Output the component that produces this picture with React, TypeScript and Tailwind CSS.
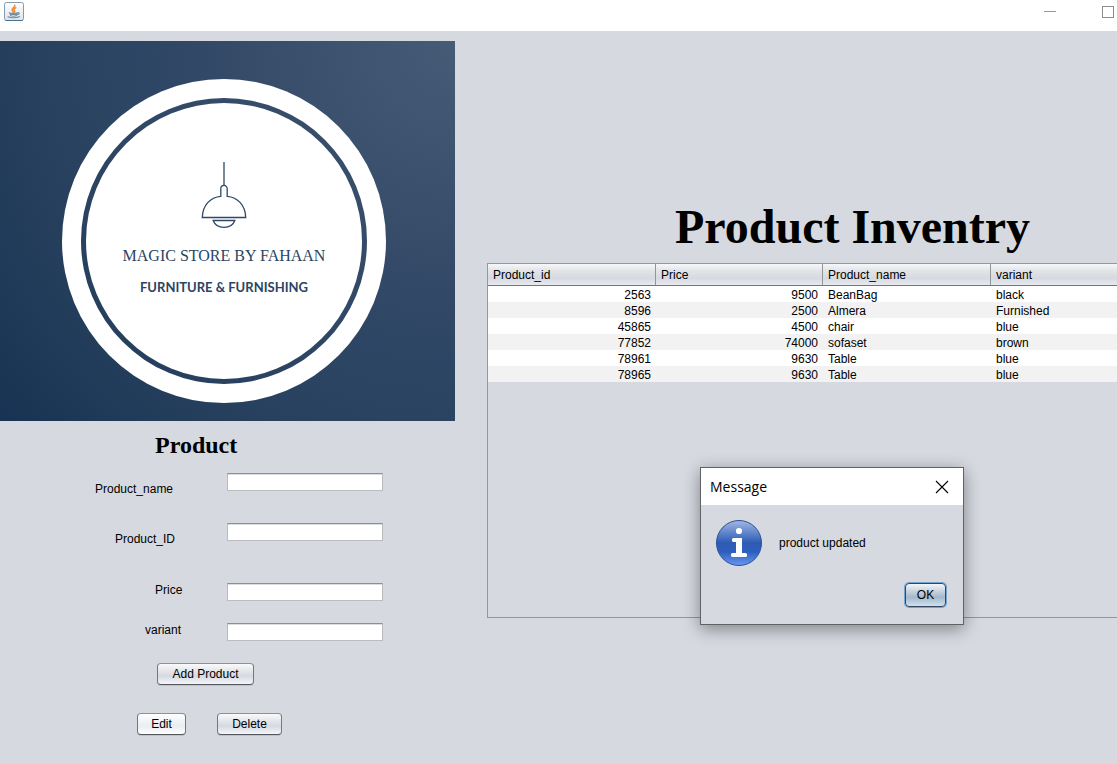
import { useState } from "react";

type Product = { id: number; price: number; name: string; variant: string };

const products: Product[] = [
  { id: 2563, price: 9500, name: "BeanBag", variant: "black" },
  { id: 8596, price: 2500, name: "Almera", variant: "Furnished" },
  { id: 45865, price: 4500, name: "chair", variant: "blue" },
  { id: 77852, price: 74000, name: "sofaset", variant: "brown" },
  { id: 78961, price: 9630, name: "Table", variant: "blue" },
  { id: 78965, price: 9630, name: "Table", variant: "blue" },
];

const fields = [
  { id: "product-name", label: "Product_name", indent: "pl-[95px] pt-[9px]", height: "h-[50px]" },
  { id: "product-id", label: "Product_ID", indent: "pl-[115px] pt-[9px]", height: "h-[60px]" },
  { id: "price", label: "Price", indent: "pl-[155px]", height: "h-[40px]" },
  { id: "variant", label: "variant", indent: "pl-[145px]", height: "h-[40px]" },
];

const buttonBase =
  "h-[22px] rounded-[4px] border border-t-[#8d9198] border-x-[#74787e] border-b-[#54585d] shadow-[0_1px_0_#bfc3c9] leading-[18px]";
const buttonNormal =
  "bg-[linear-gradient(#fafafc_0%,#e4e6ea_35%,#d6d9df_60%,#f4f6fb_100%)]";
const buttonHover =
  "bg-[linear-gradient(#ffffff_0%,#f0f2f6_40%,#e9ecf2_60%,#ffffff_100%)] border-b-[#2b2e33]";

function TitleBar() {
  return (
    <header className="flex h-[31px] items-start justify-between bg-white pl-1 pr-[3px]">
      <svg width="20" height="20" viewBox="0 0 20 20" className="mt-[2px]" aria-hidden="true">
        <defs>
          <linearGradient id="tile" x1="0" y1="0" x2="0" y2="1">
            <stop offset="0" stopColor="#ffffff" />
            <stop offset="1" stopColor="#dfe3e8" />
          </linearGradient>
        </defs>
        <rect x="0.5" y="0.5" width="19" height="18" rx="2" fill="url(#tile)" stroke="#7f9cb4" />
        <path d="M1.500 18.500h17" stroke="#47708f" />
        <path d="M10.800 3.200c.6 2-3.400 2.800-2.600 5 .3.900 1 1.400 1.100 2.200M11.800 5.800c-2.400 1-2.200 2-1.300 3 .4.600.1 1.200-.3 1.600" fill="none" stroke="#ee8a3c" strokeWidth="1.500" strokeLinecap="round" />
        <path d="M5.200 10.800c1.800.8 6 .8 8 0M6 11l.6 2.400c1.500.9 4.500.9 5.800 0l.6-2.400M13.400 10.700c2.600-.6 2.400 1.600-.4 2M4 14.800c1.500 1.300 9.500 1.300 11.500-.2" fill="none" stroke="#7593aa" strokeWidth="1.200" strokeLinecap="round" />
        <path d="M6.800 12.300h5.800" stroke="#5f87a6" strokeWidth="1.200" />
      </svg>
      <div className="flex gap-[46px]">
        <button type="button" aria-label="Minimize" className="flex h-[23px] w-3 items-center">
          <span className="h-px w-3 bg-[#999999]" />
        </button>
        <button type="button" aria-label="Maximize" className="flex h-6 w-3 items-center">
          <span className="h-3 w-3 border border-[#8c8c8c]" />
        </button>
      </div>
    </header>
  );
}

function StoreBanner() {
  return (
    <div className="flex h-[380px] items-start bg-[radial-gradient(circle_farthest-corner_at_100%_0%,#465b76_0%,#3b506c_26%,#304766_46%,#2a4462_62%,#243e5c_76%,#183253_100%)] pl-[62px] pt-[38px]">
      <div className="size-[324px] rounded-full bg-white p-[19px]">
        <div className="size-full rounded-full bg-[linear-gradient(45deg,#223c5b,#3b516d)] p-[5px]">
          <div className="flex size-full flex-col items-center rounded-full bg-white pt-[59px] text-[#2b4463]">
            <svg width="48" height="68" viewBox="0 0 48 68" fill="none" stroke="#2f4866" strokeWidth="1.300" aria-hidden="true">
              <path d="M24 0v23.500" />
              <path d="M20.800 34.300v-7.600a3.200 3.300 0 0 1 6.400 0v7.600c10.400.8 18.300 9 18.500 21.200H2.300C2.500 43.300 10.400 35.100 20.800 34.300Z" />
              <path d="M13.200 58.500h21.600c-1.500 4.300-5.600 6.800-10.800 6.800s-9.300-2.500-10.800-6.800Z" />
            </svg>
            <p className="mt-[16px] whitespace-nowrap font-['Liberation_Serif',serif] text-[16px] leading-[20px]">
              MAGIC STORE BY FAHAAN
            </p>
            <p className="mt-[11px] whitespace-nowrap font-['Lato',sans-serif] text-[13px] font-bold leading-[20px]">
              FURNITURE &amp; FURNISHING
            </p>
          </div>
        </div>
      </div>
    </div>
  );
}

function ProductForm() {
  return (
    <form onSubmit={(event) => event.preventDefault()}>
      <h2 className="pl-[155px] pt-[10px] font-['Liberation_Serif',serif] text-[24px] font-bold leading-[28px]">
        Product
      </h2>
      <div className="pt-[14px]">
        {fields.map((field) => (
          <div key={field.id} className={`flex items-start ${field.height}`}>
            <label htmlFor={field.id} className={`w-[227px] shrink-0 leading-[14px] ${field.indent}`}>
              {field.label}
            </label>
            <input
              id={field.id}
              type="text"
              className="h-[18px] w-[156px] border border-t-[#8d8e93] border-x-[#b9bbc0] border-b-[#babcc0] bg-white px-1 shadow-[inset_0_1px_0_#dcdde0] outline-none"
            />
          </div>
        ))}
      </div>
      <div className="pl-[157px]">
        <button type="submit" className={`w-[97px] ${buttonBase} ${buttonNormal}`}>
          Add Product
        </button>
      </div>
      <div className="flex gap-[31px] pl-[137px] pt-[28px]">
        <button type="button" className={`w-[49px] ${buttonBase} ${buttonHover}`}>
          Edit
        </button>
        <button type="button" className={`w-[65px] ${buttonBase} ${buttonNormal}`}>
          Delete
        </button>
      </div>
    </form>
  );
}

function InventoryTable() {
  const head = "border-r border-[#8f949d] pl-[5px] text-left font-normal";
  return (
    <div className="h-[355px] border border-r-0 border-[#9297a1]">
      <table className="w-full table-fixed border-separate border-spacing-0">
        <colgroup>
          <col className="w-[168px]" />
          <col className="w-[167px]" />
          <col className="w-[168px]" />
          <col />
        </colgroup>
        <thead>
          <tr className="h-[22px] bg-[linear-gradient(#f6f7f9_0%,#e2e4e8_30%,#d6d9df_65%,#e9ecf2_100%)] *:border-b *:border-b-[#6f757f]">
            <th className={head}>Product_id</th>
            <th className={head}>Price</th>
            <th className={head}>Product_name</th>
            <th className="pl-[5px] text-left font-normal">variant</th>
          </tr>
        </thead>
        <tbody>
          {products.map((product) => (
            <tr key={product.id} className="bg-white leading-[14px] *:pt-[2px] even:bg-[#f2f2f2]">
              <td className="pr-[5px] text-right">{product.id}</td>
              <td className="pr-[5px] text-right">{product.price}</td>
              <td className="pl-[5px]">{product.name}</td>
              <td className="pl-[5px]">{product.variant}</td>
            </tr>
          ))}
        </tbody>
      </table>
    </div>
  );
}

function MessageDialog({ onClose }: { onClose: () => void }) {
  return (
    <div
      role="dialog"
      aria-labelledby="message-title"
      className="absolute left-[700px] top-[467px] w-[264px] border border-[#606266] bg-[#d6d9df] shadow-[0_4px_16px_rgba(0,0,0,0.4)]"
    >
      <div className="flex h-[37px] items-center justify-between bg-white pl-[9px] pr-[14px]">
        <h3 id="message-title" className="font-['Open_Sans',sans-serif] text-[14px] leading-[20px]">
          Message
        </h3>
        <button type="button" aria-label="Close" onClick={onClose}>
          <svg width="14" height="14" viewBox="0 0 14 14" stroke="#000" strokeWidth="1.100" aria-hidden="true">
            <path d="M1 1l12 12M13 1L1 13" />
          </svg>
        </button>
      </div>
      <div className="flex items-center gap-4 pl-[14px] pt-[14px]">
        <svg width="48" height="48" viewBox="0 0 48 48" aria-hidden="true">
          <defs>
            <linearGradient id="info" x1="0" y1="0" x2="0" y2="1">
              <stop offset="0" stopColor="#a3b8e2" />
              <stop offset="0.300" stopColor="#5a80c8" />
              <stop offset="0.500" stopColor="#2d5bb4" />
              <stop offset="0.700" stopColor="#2f5fbe" />
              <stop offset="1" stopColor="#6a98f2" />
            </linearGradient>
          </defs>
          <circle cx="24" cy="24" r="22.500" fill="url(#info)" stroke="#2a4f9c" />
          <circle cx="24" cy="12" r="3.100" fill="#fff" />
          <path d="M18.500 19h8.500v15h3.500a1.500 1.500 0 0 1 1.500 1.500v1a1.500 1.500 0 0 1-1.500 1.500h-13a1.500 1.500 0 0 1-1.500-1.500v-1a1.500 1.500 0 0 1 1.500-1.500H21V23h-2.500a1.500 1.500 0 0 1-1.500-1.500v-1a1.500 1.500 0 0 1 1.500-1.500Z" fill="#fff" />
        </svg>
        <p>product updated</p>
      </div>
      <div className="flex justify-end pb-[17px] pr-[17px] pt-4">
        <button
          type="button"
          onClick={onClose}
          className="h-6 w-[41px] rounded-[4px] border border-[#34475c] bg-[linear-gradient(#f3f6f9_0%,#c4d1dc_35%,#a3b8cb_60%,#cfe0ee_100%)] leading-[18px] shadow-[0_0_0_1px_#73a4d1]"
        >
          OK
        </button>
      </div>
    </div>
  );
}

export default function App() {
  const [dialogOpen, setDialogOpen] = useState(true);
  return (
    <div className="relative min-h-screen bg-[#d6d9e0] font-['Liberation_Sans',Arial,sans-serif] text-[12px] leading-[16px] text-black">
      <TitleBar />
      <main className="flex items-start gap-[32px] pt-[10px]">
        <section className="w-[455px] shrink-0">
          <StoreBanner />
          <ProductForm />
        </section>
        <section className="min-w-0 flex-1 pt-[158px]">
          <h1 className="whitespace-nowrap pl-[188px] font-['Liberation_Serif',serif] text-[48px] font-bold leading-[56px]">
            Product Inventry
          </h1>
          <div className="pt-[8px]">
            <InventoryTable />
          </div>
        </section>
      </main>
      {dialogOpen && <MessageDialog onClose={() => setDialogOpen(false)} />}
    </div>
  );
}
